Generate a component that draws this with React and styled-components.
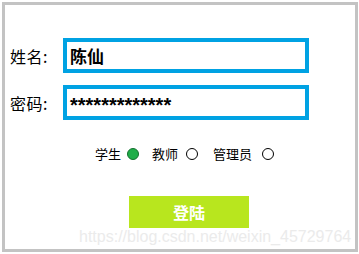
import React, { useState } from 'react';
import styled, { createGlobalStyle } from 'styled-components';

const GlobalStyle = createGlobalStyle`
  html, body {
    margin: 0;
    padding: 0;
    background: #ffffff;
  }
`;

const Frame = styled.div`
  position: relative;
  box-sizing: border-box;
  width: 356px;
  height: 250px;
  margin: 2px 0 0 2px;
  border: 3px solid #c3c3c3;
  padding: 33px 0 0 5px;
  font-family: "Noto Sans CJK SC", "Liberation Sans", sans-serif;
  color: #000;
`;

const FieldRow = styled.div`
  display: flex;
  align-items: center;
  margin-bottom: ${props => props.gap || 0}px;
`;

const Label = styled.label`
  width: 53px;
  font-size: 16px;
  line-height: 20px;
  letter-spacing: 0.5px;
`;

const TextBox = styled.div`
  box-sizing: border-box;
  width: 246px;
  height: 35px;
  border: 4px solid #00a2e3;
  padding-left: 3px;
  display: flex;
  align-items: center;
  font-size: ${props => (props.secret ? '20px' : '17px')};
  font-weight: 700;
  font-family: ${props => (props.secret ? '"Liberation Sans", sans-serif' : '"Noto Sans CJK SC", sans-serif')};
  padding-top: ${props => (props.secret ? '6px' : '0')};
`;

const RoleRow = styled.div`
  display: flex;
  align-items: center;
  margin: 25px 0 0 85px;
  font-size: 13px;
  line-height: 18px;
`;

const Role = styled.span`
  display: flex;
  align-items: center;
  margin-right: ${props => props.space}px;
  cursor: pointer;
`;

const Dot = styled.span`
  box-sizing: border-box;
  display: inline-block;
  width: 12px;
  height: 12px;
  margin-left: ${props => props.lead}px;
  border-radius: 50%;
  border: 1px solid ${props => (props.on ? '#14702f' : '#000')};
  background: ${props => (props.on ? '#1fae49' : '#fff')};
`;

const LoginButton = styled.button`
  display: block;
  width: 120px;
  height: 32px;
  margin: 33px 0 0 119px;
  border: none;
  background: #b8e61e;
  color: #fff;
  font-family: "Noto Sans CJK SC", sans-serif;
  font-size: 16px;
  font-weight: 700;
  cursor: pointer;
`;

const Watermark = styled.div`
  position: absolute;
  left: 74px;
  top: 223px;
  font-family: "Liberation Sans", sans-serif;
  font-size: 16px;
  color: #ebebeb;
  pointer-events: none;
  white-space: nowrap;
`;

const roles = [
  { label: '学生', lead: 6, space: 13 },
  { label: '教师', lead: 8, space: 15 },
  { label: '管理员', lead: 10, space: 0 },
];

const App = () => {
  const [role, setRole] = useState('学生');

  return (
    <>
      <GlobalStyle />
      <Frame>
        <FieldRow gap={12}>
          <Label>姓名:</Label>
          <TextBox>陈仙</TextBox>
        </FieldRow>
        <FieldRow>
          <Label>密码:</Label>
          <TextBox secret>*************</TextBox>
        </FieldRow>
        <RoleRow>
          {roles.map(r => (
            <Role key={r.label} space={r.space} onClick={() => setRole(r.label)}>
              {r.label}
              <Dot lead={r.lead} on={role === r.label} />
            </Role>
          ))}
        </RoleRow>
        <LoginButton>登陆</LoginButton>
        <Watermark>https://blog.csdn.net/weixin_45729764</Watermark>
      </Frame>
    </>
  );
};

export default App;
